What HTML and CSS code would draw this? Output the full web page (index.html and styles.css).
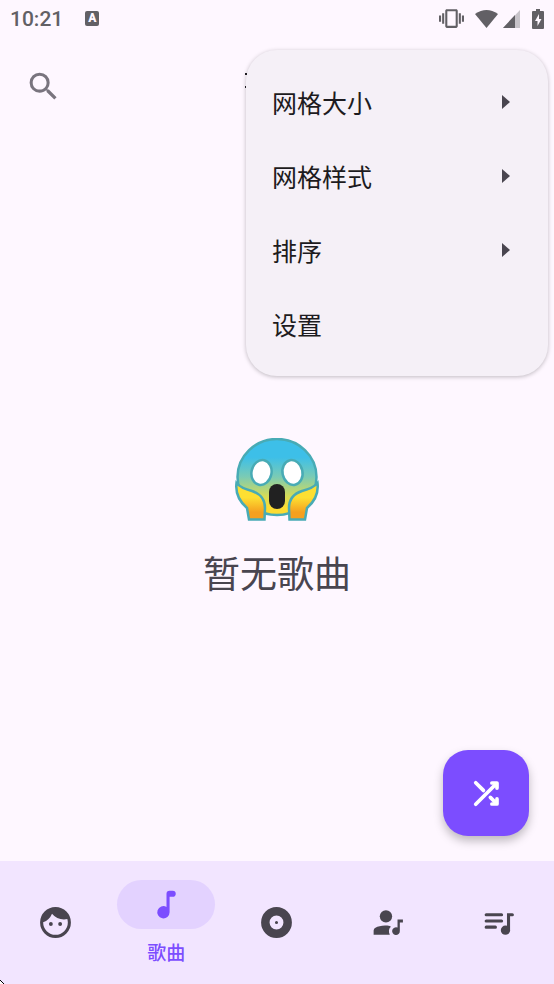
FILE: index.html
```html
<!DOCTYPE html>
<html lang="zh-CN">
<head>
<meta charset="utf-8">
<meta name="viewport" content="width=device-width, initial-scale=1">
<title>歌曲</title>
<link rel="stylesheet" href="styles.css">
</head>
<body>
<div class="app">
  <div class="status">
    <span class="clock">10:21</span>
    <span class="keyboard">A</span>
    <div class="indicators">
      <svg width="25" height="25" viewBox="0 0 24 24"><path d="M0 15h2V9H0v6zm3 2h2V7H3v10zm19-8v6h2V9h-2zm-3 8h2V7h-2v10zM16.500 3h-9C6.670 3 6 3.670 6 4.500v15c0 .83.67 1.500 1.500 1.500h9c.83 0 1.500-.67 1.500-1.500v-15c0-.83-.67-1.500-1.500-1.500zM16 19H8V5h8v14z"/></svg>
      <svg class="wifi" width="23" height="18" viewBox="0 0 23 18"><path d="M0 4Q11.500-4 23 4L11.500 18z"/></svg>
      <svg class="signal" width="17" height="18" viewBox="0 0 17 18"><path d="M17 0v18H0z" opacity=".35"/><path d="M12 5v13H0z"/></svg>
      <svg class="battery" width="12" height="20" viewBox="0 0 12 20"><path fill-rule="evenodd" d="M4 0h4v2h3q1 0 1 1v16q0 1-1 1H1q-1 0-1-1V3q0-1 1-1h3zM7 5l-4 7h2.500v5L9.500 10H7z"/></svg>
    </div>
  </div>

  <header class="toolbar">
    <button class="icon-button" type="button" aria-label="搜索">
      <svg class="icon" viewBox="0 0 24 24"><path d="M15.500 14h-.79l-.28-.27A6.470 6.470 0 0 0 16 9.500 6.500 6.500 0 1 0 9.500 16c1.610 0 3.090-.59 4.230-1.570l.27.28v.79l5 4.990L20.490 19l-4.990-5zm-6 0C7.010 14 5 11.990 5 9.500S7.010 5 9.500 5 14 7.010 14 9.500 11.990 14 9.500 14z"/></svg>
    </button>
  </header>

  <main class="content">
    <svg class="emoji" viewBox="0 0 84 84" aria-hidden="true">
      <defs>
        <linearGradient id="face" x1="0" y1="0" x2="0" y2="1">
          <stop offset="0.24" stop-color="#3dbfe8"/><stop offset="0.5" stop-color="#7bcbb4"/><stop offset="0.75" stop-color="#d4dc58"/><stop offset="0.9" stop-color="#fddc32"/>
        </linearGradient>
        <linearGradient id="hand" x1="0" y1="0" x2="0" y2="1">
          <stop offset="0.4" stop-color="#fddf32"/><stop offset="0.8" stop-color="#f5a01f"/>
        </linearGradient>
      </defs>
      <g stroke="#48abb5" stroke-width="2.500">
        <ellipse cx="42" cy="39" rx="39.500" ry="38" fill="url(#face)"/>
        <ellipse cx="26.500" cy="34.500" rx="10" ry="12.500" fill="#fff" transform="rotate(12 26.500 34.500)"/>
        <ellipse cx="57.500" cy="34.500" rx="10" ry="12.500" fill="#fff" transform="rotate(-12 57.500 34.500)"/>
        <path d="M1.500 45C0 57 5 64 12 70L14 81.500H29.500L30 70C30 61 26 56 17 53C9 51 4 48 1.500 45z" fill="url(#hand)"/>
        <path d="M82.500 45C84 57 79 64 72 70L70 81.500H54.500L54 70C54 61 58 56 67 53C75 51 80 48 82.500 45z" fill="url(#hand)"/>
      </g>
      <rect x="34" y="46" width="16" height="25" rx="8" fill="#212121"/>
    </svg>
    <p class="empty">暂无歌曲</p>
    <button class="fab" type="button" aria-label="随机播放">
      <svg class="icon shuffle" viewBox="0 0 24 24"><path d="M5 5l5 5M5 19L18 6M14.500 14.500L18 18"/><path d="M15.500 5.200h3.300v3.300M15.500 18.800h3.300v-3.300"/></svg>
    </button>
  </main>

  <nav class="nav">
    <a class="tab" href="#home" aria-label="主页">
      <svg class="icon" viewBox="0 0 24 24"><path d="M10.250 13a1.250 1.250 0 1 1-2.500 0 1.250 1.250 0 0 1 2.500 0zM15 11.750a1.250 1.250 0 1 0 0 2.500 1.250 1.250 0 0 0 0-2.500zM22 12a10 10 0 1 1-20 0 10 10 0 0 1 20 0zm-2 0c0-.78-.12-1.530-.33-2.240-.7.150-1.420.24-2.170.24a10 10 0 0 1-7.760-3.690A10.020 10.020 0 0 1 4 11.860V12a8 8 0 0 0 16 0z"/></svg>
    </a>
    <a class="tab active" href="#songs" aria-current="page">
      <span class="pill"><svg class="icon" viewBox="0 0 24 24"><path d="M12 5v8.550A4 4 0 1 0 14 17V7h2a2 2 0 0 0 0-4h-2a2 2 0 0 0-2 2z"/></svg></span>
      <span class="label">歌曲</span>
    </a>
    <a class="tab" href="#albums" aria-label="专辑">
      <svg class="icon" viewBox="0 0 24 24"><path d="M12 2a10 10 0 1 0 0 20 10 10 0 0 0 0-20zm0 14.500a4.500 4.500 0 1 1 0-9 4.500 4.500 0 0 1 0 9zm0-5.500a1 1 0 1 0 0 2 1 1 0 0 0 0-2z"/></svg>
    </a>
    <a class="tab" href="#artists" aria-label="艺术家">
      <svg class="icon" viewBox="0 0 24 24"><circle cx="11" cy="8" r="4"/><path d="M13.500 14.200c-4-.7-7.200 0-9.300 1.200C3.400 15.900 3 16.500 3 17.400V20H13.500c-1-2-.7-4 .7-5.200z"/><path d="M18.500 10v5.300a2.500 2.500 0 1 0 1.500 2.200V12H22v-2z"/></svg>
    </a>
    <a class="tab" href="#playlists" aria-label="播放列表">
      <svg class="icon" viewBox="0 0 24 24"><g fill="none" stroke="currentColor" stroke-width="2" stroke-linecap="round"><path d="M4 7h10M4 11h10M4 15h6M18.500 17V7h2.500"/></g><circle cx="16.500" cy="17" r="3"/></svg>
    </a>
  </nav>

  <div class="menu" role="menu">
    <svg class="edge-marks" width="2" height="16" viewBox="0 0 2 16" aria-hidden="true"><path d="M0 0h2v2H0zM0 13h1v2H0z"/></svg>
    <button class="menu-item" type="button" role="menuitem">网格大小<svg width="8" height="14" viewBox="0 0 8 14"><path d="M0 0l8 7-8 7z"/></svg></button>
    <button class="menu-item" type="button" role="menuitem">网格样式<svg width="8" height="14" viewBox="0 0 8 14"><path d="M0 0l8 7-8 7z"/></svg></button>
    <button class="menu-item" type="button" role="menuitem">排序<svg width="8" height="14" viewBox="0 0 8 14"><path d="M0 0l8 7-8 7z"/></svg></button>
    <button class="menu-item" type="button" role="menuitem">设置</button>
  </div>
  <svg class="corner" width="4" height="4" viewBox="0 0 4 4" aria-hidden="true"><path d="M0 0l4 4H0z" fill="#fff"/><path d="M0 0l4 4" stroke="#000"/></svg>
</div>
</body>
</html>
```
FILE: styles.css
```css
* { box-sizing: border-box; }

body {
  margin: 0;
  font-family: Roboto, "Noto Sans CJK SC", sans-serif;
  background: #fef7ff;
  color: #1d1b20;
}

button {
  border: 0;
  padding: 0;
  background: none;
  font: inherit;
  color: inherit;
}

svg { display: block; fill: currentColor; }

.icon { width: 37px; height: 37px; }

.app {
  position: relative;
  display: flex;
  flex-direction: column;
  min-height: 100vh;
}

.status {
  display: flex;
  align-items: center;
  height: 37px;
  padding: 0 10px;
  color: #626065;
}

.clock { font-size: 21px; font-weight: 500; }

.keyboard {
  width: 14px;
  height: 15px;
  margin-left: 22px;
  border-radius: 2px;
  background: #626065;
  color: #fef7ff;
  font-size: 12px;
  font-weight: 900;
  line-height: 15px;
  text-align: center;
}

.indicators {
  display: flex;
  align-items: center;
  margin-left: auto;
}

.wifi { margin-left: 11px; }
.signal { margin-left: 5px; }
.battery { margin-left: 12px; }

.toolbar {
  display: flex;
  align-items: center;
  height: 98px;
  padding: 0 25px;
}

.icon-button { color: #79747e; }

.content {
  position: relative;
  flex: 1;
  display: flex;
  flex-direction: column;
  align-items: center;
  padding-top: 303px;
}

.emoji { width: 84px; height: 84px; }

.empty {
  margin: 27px 0 0;
  color: #49454f;
  font-size: 37px;
  line-height: 54px;
}

.fab {
  position: absolute;
  right: 25px;
  bottom: 25px;
  display: grid;
  place-items: center;
  width: 86px;
  height: 86px;
  border-radius: 25px;
  background: #7c4dff;
  color: #fff;
  box-shadow: 0 5px 10px rgba(0, 0, 0, 0.25);
}

.shuffle {
  fill: none;
  stroke: currentColor;
  stroke-width: 2.4;
  stroke-linecap: round;
  stroke-linejoin: round;
}

.nav {
  display: grid;
  grid-template-columns: repeat(5, 1fr);
  height: 123px;
  background: #f2e5ff;
  color: #49454f;
}

.tab {
  display: flex;
  flex-direction: column;
  align-items: center;
  justify-content: center;
  color: inherit;
  text-decoration: none;
}

.tab.active { color: #7c4dff; }

.pill {
  display: grid;
  place-items: center;
  width: 98px;
  height: 49px;
  border-radius: 25px;
  background: #e3d2ff;
}

.label {
  margin-top: 13px;
  font-size: 19px;
  font-weight: 500;
  line-height: 24px;
}

.menu {
  position: absolute;
  top: 50px;
  right: 6px;
  width: 302px;
  padding: 15px 0;
  border-radius: 31px;
  background: #f5f0f7;
  box-shadow: 0 1px 4px rgba(0, 0, 0, 0.25);
}

.menu-item {
  display: flex;
  align-items: center;
  justify-content: space-between;
  width: 100%;
  height: 74px;
  padding: 0 38px 0 26px;
  font-size: 25px;
}

.menu-item svg { color: #49454f; }

.edge-marks {
  position: absolute;
  top: 23px;
  left: -1px;
}

.corner {
  position: absolute;
  left: 0;
  bottom: 0;
}
```
